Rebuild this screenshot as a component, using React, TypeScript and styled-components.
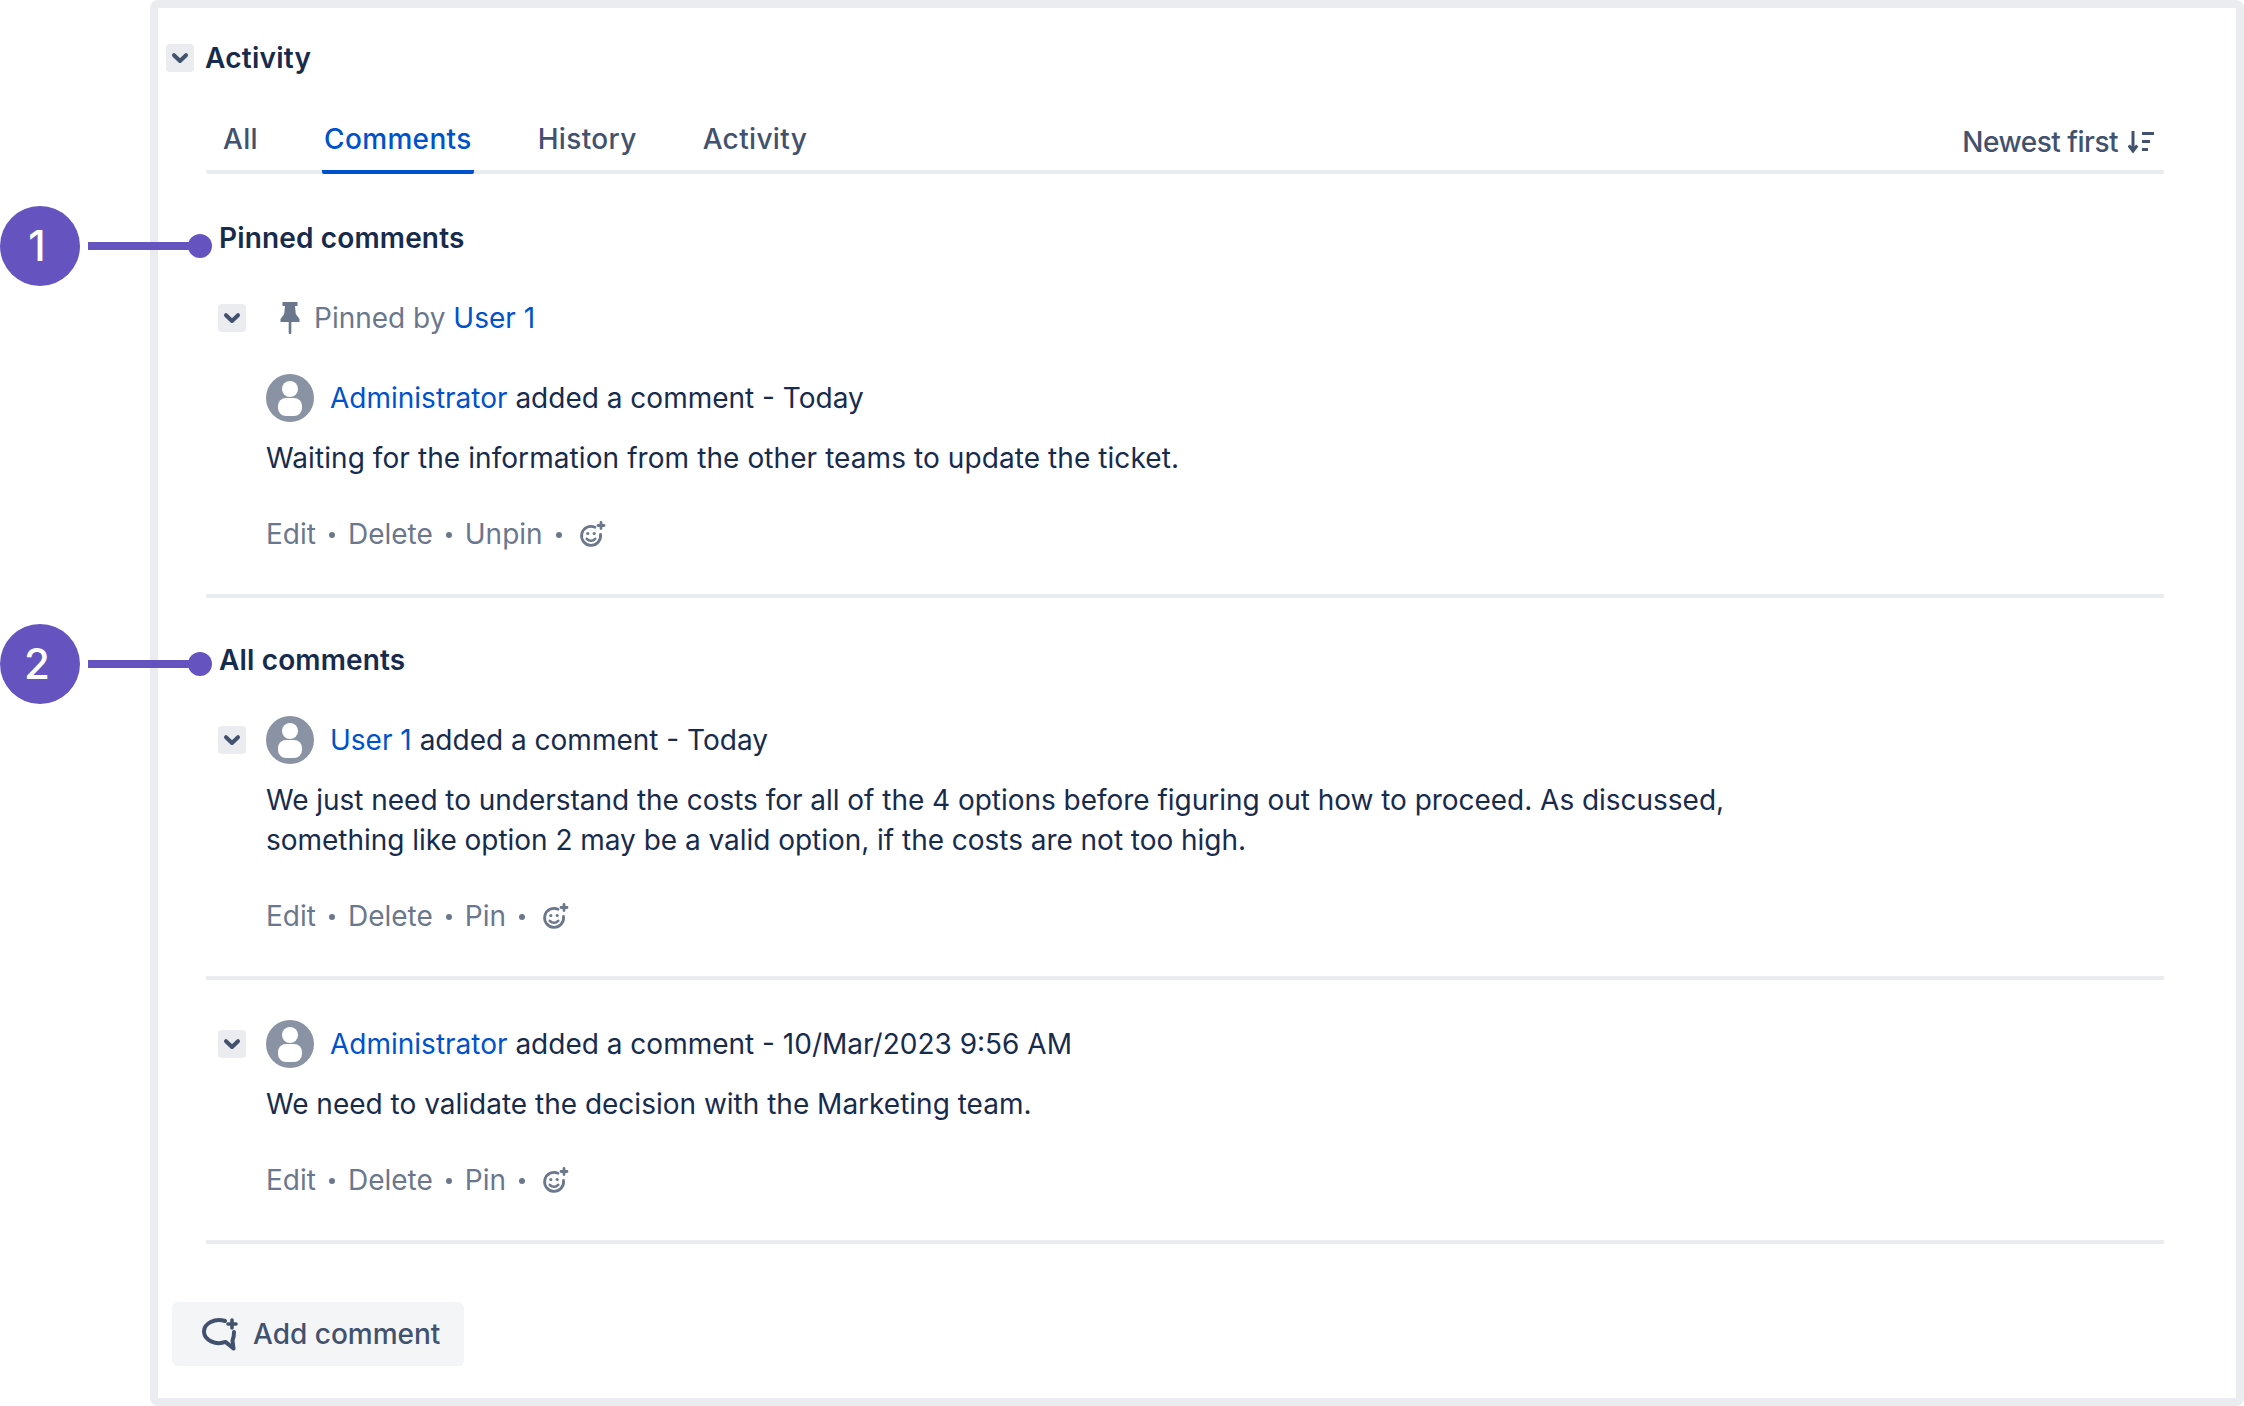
import styled, { createGlobalStyle } from "styled-components";

const GlobalStyle = createGlobalStyle`
  html, body {
    margin: 0;
    padding: 0;
    background: #fff;
  }
  body {
    font-family: Inter, "Liberation Sans", sans-serif;
    font-size: 28px;
    line-height: 40px;
    color: #172b4d;
  }
`;

const Page = styled.div`
  position: relative;
  width: 2244px;
  height: 1406px;
  padding-left: 150px;
  box-sizing: border-box;
  overflow: hidden;
`;

const Panel = styled.section`
  box-sizing: border-box;
  height: 1406px;
  border: 8px solid #ebecf0;
  border-radius: 8px;
  padding: 36px 72px 0 8px;
`;

const TitleRow = styled.div`
  display: flex;
  align-items: center;
  gap: 11px;
  height: 28px;
`;

const Title = styled.h2`
  margin: 0;
  font-size: 28px;
  font-weight: 600;
  line-height: 40px;
  letter-spacing: 0.25px;
`;

const Toggle = styled.span`
  display: flex;
  align-items: center;
  justify-content: center;
  flex: none;
  width: 28px;
  height: 28px;
  border-radius: 4px;
  background: #ebecf0;
  color: #42526e;
`;

const Body = styled.div`
  margin-left: 40px;
`;

const TabBar = styled.div`
  display: flex;
  align-items: flex-end;
  justify-content: space-between;
  height: 56px;
  margin-top: 42px;
  padding: 0 8px 0 15px;
  border-bottom: 4px solid #ebecf0;
  border-radius: 2px;
`;

const TabList = styled.div`
  display: flex;
  gap: 62px;
`;

const Tab = styled.span<{ $active?: boolean }>`
  height: 60px;
  margin-bottom: -4px;
  padding: 0 2px;
  box-sizing: border-box;
  font-weight: 500;
  line-height: 50px;
  letter-spacing: 0.35px;
  color: ${(p) => (p.$active ? "#0052cc" : "#42526e")};
  border-bottom: 4px solid ${(p) => (p.$active ? "#0052cc" : "transparent")};
  border-radius: 0 0 2px 2px;
`;

const Sort = styled.span`
  display: flex;
  align-items: center;
  gap: 10px;
  height: 56px;
  font-weight: 500;
  letter-spacing: -0.5px;
  color: #42526e;
`;

const Heading = styled.h3<{ $top: number }>`
  margin: ${(p) => p.$top}px 0 0;
  padding-left: 13px;
  font-size: 28px;
  font-weight: 600;
  line-height: 40px;
  letter-spacing: 0.15px;
`;

const Comment = styled.article<{ $top: number }>`
  display: grid;
  grid-template-columns: 28px 1fr;
  column-gap: 20px;
  align-items: start;
  margin-top: ${(p) => p.$top}px;
  padding: 0 12px 40px;
  border-bottom: 4px solid #ebecf0;
`;

const ToggleCell = styled.div`
  display: flex;
  align-items: center;
  height: 48px;
`;

const PinnedToggleCell = styled(ToggleCell)`
  height: 40px;
`;

const PinnedBy = styled.div`
  display: flex;
  align-items: center;
  gap: 14px;
  height: 40px;
  margin-bottom: 36px;
  padding-left: 14px;
  color: #6b778c;
`;

const Author = styled.div`
  display: flex;
  align-items: center;
  gap: 16px;
  height: 48px;
  white-space: pre;
`;

const UserLink = styled.a`
  color: #0052cc;
  text-decoration: none;
`;

const Text = styled.p<{ $tracking?: number }>`
  max-width: 1480px;
  margin: 16px 0 0;
  letter-spacing: ${(p) => p.$tracking ?? 0}px;
`;

const Actions = styled.div`
  display: flex;
  align-items: center;
  gap: 13px;
  height: 40px;
  margin-top: 36px;
  color: #6b778c;
`;

const Dot = styled.span`
  width: 6px;
  height: 6px;
  border-radius: 50%;
  background: #6b778c;
  margin: 2px 0 0;
`;

const ReactionSlot = styled.span`
  display: flex;
  margin-left: 3px;
`;

const AddButton = styled.button`
  display: flex;
  align-items: center;
  gap: 13px;
  width: 292px;
  height: 64px;
  margin: 58px 0 0 6px;
  padding: 0 0 0 28px;
  border: 0;
  border-radius: 6px;
  background: #f4f5f7;
  color: #42526e;
  font: 500 28px/40px Inter, "Liberation Sans", sans-serif;
`;

const Callout = styled.div<{ $top: number }>`
  position: absolute;
  left: 0;
  top: ${(p) => p.$top}px;
  display: flex;
  align-items: center;
`;

const Badge = styled.span`
  display: flex;
  align-items: center;
  justify-content: center;
  box-sizing: border-box;
  width: 80px;
  height: 80px;
  padding-right: 6px;
  border-radius: 50%;
  background: #6554c0;
  color: #fff;
  font-size: 42px;
  font-weight: 500;
`;

const Leader = styled.span`
  width: 102px;
  height: 8px;
  margin-left: 8px;
  background: #6554c0;
`;

const LeaderEnd = styled.span`
  width: 24px;
  height: 24px;
  margin-left: -2px;
  border-radius: 50%;
  background: #6554c0;
`;

function Chevron() {
  return (
    <svg width="20" height="20" viewBox="0 0 20 20" fill="none">
      <path d="M4 7.200 10 13l6-5.800" stroke="currentColor" strokeWidth="4" strokeLinecap="round" strokeLinejoin="round" />
    </svg>
  );
}

function PinIcon() {
  return (
    <svg width="20" height="32" viewBox="0 0 20 32" fill="#6b778c">
      <path d="M2.500 0h15v4h-2.500l.8 8 3.700 5v3H.500v-3l3.700-5 .8-8H2.500z" />
      <rect x="8.700" y="19" width="2.600" height="13" rx="1" />
    </svg>
  );
}

function Avatar() {
  return (
    <svg width="48" height="48" viewBox="0 0 48 48">
      <circle cx="24" cy="24" r="24" fill="#8993a4" />
      <circle cx="24" cy="15" r="8" fill="#fff" />
      <rect x="12" y="24" width="24" height="18" rx="8" fill="#fff" />
    </svg>
  );
}

function ReactionIcon() {
  return (
    <svg width="28" height="28" viewBox="0 0 28 28" fill="none" stroke="#6b778c" strokeWidth="2.800" strokeLinecap="round">
      <path d="M17 7.200A9.500 9.500 0 1 0 22.500 14.500" />
      <path d="M8.800 18.800c2.400 2.600 6 2.600 8.400 0" strokeWidth="2.600" />
      <circle cx="9.800" cy="13.500" r="1.600" fill="#6b778c" stroke="none" />
      <circle cx="16.200" cy="13.500" r="1.600" fill="#6b778c" stroke="none" />
      <path d="M23 2.500v6M20 5.500h6" />
    </svg>
  );
}

function SortIcon() {
  return (
    <svg width="28" height="24" viewBox="0 0 28 24" fill="none" stroke="#42526e" strokeWidth="3">
      <path d="M5 1v20M.8 15.500 5 21l4.200-5.500" />
      <path d="M14 3.500h12M14 11.500h8M14 19.500h6" />
    </svg>
  );
}

function AddCommentIcon() {
  return (
    <svg width="40" height="34" viewBox="0 0 40 34" fill="none" stroke="#42526e" strokeWidth="4" strokeLinecap="round">
      <path d="M25 4A15 11.500 0 1 0 25.500 24.900L33.500 31.500 32.500 23.500C33.500 21.500 34 18 34 15" strokeLinejoin="round" />
      <path d="M32 3v8M28 7h8" strokeWidth="3.600" />
    </svg>
  );
}

const Separator = () => <Dot />;

function CommentActions({ pin }: { pin: string }) {
  return (
    <Actions>
      <span>Edit</span>
      <Separator />
      <span>Delete</span>
      <Separator />
      <span>{pin}</span>
      <Separator />
      <ReactionSlot><ReactionIcon /></ReactionSlot>
    </Actions>
  );
}

export default function App() {
  return (
    <Page>
      <GlobalStyle />
      <Panel>
        <TitleRow>
          <Toggle><Chevron /></Toggle>
          <Title>Activity</Title>
        </TitleRow>
        <Body>
          <TabBar>
            <TabList>
              <Tab>All</Tab>
              <Tab $active>Comments</Tab>
              <Tab>History</Tab>
              <Tab>Activity</Tab>
            </TabList>
            <Sort>Newest first <SortIcon /></Sort>
          </TabBar>

          <Heading $top={44}>Pinned comments</Heading>
          <Comment $top={40}>
            <PinnedToggleCell><Toggle><Chevron /></Toggle></PinnedToggleCell>
            <div>
              <PinnedBy>
                <PinIcon />
                <span>Pinned by <UserLink>User 1</UserLink></span>
              </PinnedBy>
              <Author>
                <Avatar />
                <span><UserLink>Administrator</UserLink> added a comment - Today</span>
              </Author>
              <Text $tracking={0.08}>Waiting for the information from the other teams to update the ticket.</Text>
              <CommentActions pin="Unpin" />
            </div>
          </Comment>

          <Heading $top={42}>All comments</Heading>
          <Comment $top={36}>
            <ToggleCell><Toggle><Chevron /></Toggle></ToggleCell>
            <div>
              <Author>
                <Avatar />
                <span><UserLink>User 1</UserLink> added a comment - Today</span>
              </Author>
              <Text $tracking={-0.03}>We just need to understand the costs for all of the 4 options before figuring out how to proceed. As discussed, something like option 2 may be a valid option, if the costs are not too high.</Text>
              <CommentActions pin="Pin" />
            </div>
          </Comment>
          <Comment $top={40}>
            <ToggleCell><Toggle><Chevron /></Toggle></ToggleCell>
            <div>
              <Author>
                <Avatar />
                <span><UserLink>Administrator</UserLink> added a comment - 10/Mar/2023 9:56 AM</span>
              </Author>
              <Text>We need to validate the decision with the Marketing team.</Text>
              <CommentActions pin="Pin" />
            </div>
          </Comment>
        </Body>
        <AddButton><AddCommentIcon />Add comment</AddButton>
      </Panel>
      <Callout $top={206}>
        <Badge>1</Badge>
        <Leader />
        <LeaderEnd />
      </Callout>
      <Callout $top={624}>
        <Badge>2</Badge>
        <Leader />
        <LeaderEnd />
      </Callout>
    </Page>
  );
}
